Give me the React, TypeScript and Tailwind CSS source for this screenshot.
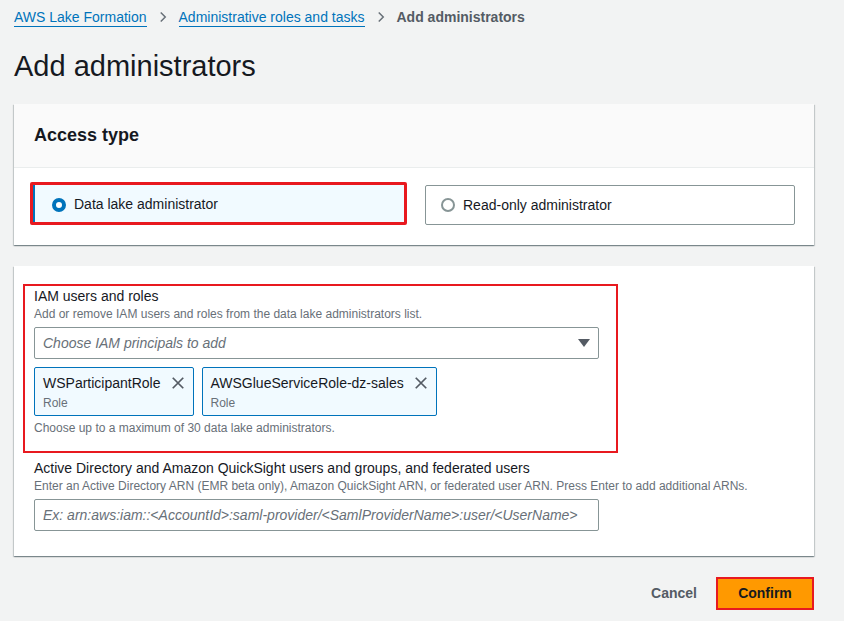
import React from 'react';

const ChevronRight = () => (
  <svg width="12" height="12" viewBox="0 0 16 16" className="mx-[10px]">
    <path d="M5 2l6 6-6 6" fill="none" stroke="#687078" strokeWidth="2" />
  </svg>
);

const XIcon = () => (
  <svg width="14" height="14" viewBox="0 0 16 16">
    <path d="M2 2l12 12M14 2L2 14" fill="none" stroke="#545b64" strokeWidth="2" />
  </svg>
);

const Token = ({ name }: { name: string }) => (
  <div className="flex items-start gap-[10px] border border-[#0073bb] bg-[#f1faff] rounded-[2px] pl-[8px] pr-[8px] pt-[5px] pb-[4px]">
    <div className="flex flex-col">
      <span className="text-[14px] leading-[20px] text-[#16191f]">{name}</span>
      <span className="text-[12px] leading-[16px] text-[#687078] mt-[2px]">Role</span>
    </div>
    <div className="mt-[3px]">
      <XIcon />
    </div>
  </div>
);

const App = () => {
  return (
    <div
      className="w-[844px] h-[621px] bg-[#f2f3f3] overflow-hidden px-[14px]"
      style={{ fontFamily: '"Liberation Sans", Arial, sans-serif' }}
    >
      {/* Breadcrumbs */}
      <nav className="flex items-center pt-[6px] h-[28px] text-[14px]">
        <a className="text-[#0073bb] border-b border-[#0073bb] leading-[18px]">AWS Lake Formation</a>
        <ChevronRight />
        <a className="text-[#0073bb] border-b border-[#0073bb] leading-[18px]">Administrative roles and tasks</a>
        <ChevronRight />
        <span className="text-[#545b64] font-bold">Add administrators</span>
      </nav>

      <h1 className="text-[29px] leading-[36px] text-[#16191f] mt-[20px]">Add administrators</h1>

      {/* Access type card */}
      <section className="w-[800px] mt-[20px] bg-white shadow-[0_1px_1px_0_rgba(0,28,36,0.3),1px_1px_1px_0_rgba(0,28,36,0.15),-1px_1px_1px_0_rgba(0,28,36,0.15)]">
        <div className="h-[64px] bg-[#fafafa] border-b border-[#eaeded] flex items-center px-[20px]">
          <h2 className="text-[18px] font-bold text-[#16191f]">Access type</h2>
        </div>
        <div className="flex gap-[18px] px-[16px] pt-[14px] pb-[20px]">
          <div className="w-[377px] border-[3px] border-[#e8191f] rounded-[2px]">
            <div className="h-[37px] bg-[#f1faff] border-l-2 border-[#0073bb] flex items-center px-[17px] gap-[8px] pt-[2px]">
              <span className="w-[14px] h-[14px] rounded-full border-[4px] border-[#0073bb] bg-white" />
              <span className="text-[14px] text-[#16191f]">Data lake administrator</span>
            </div>
          </div>
          <div className="w-[370px] h-[40px] mt-[3px] border border-[#879596] rounded-[2px] flex items-center px-[15px] gap-[8px]">
            <span className="w-[14px] h-[14px] rounded-full border-2 border-[#879596] bg-white" />
            <span className="text-[14px] text-[#16191f]">Read-only administrator</span>
          </div>
        </div>
      </section>

      {/* Principals card */}
      <section className="w-[800px] mt-[21px] bg-white px-[9px] pt-[18px] pb-[25px] shadow-[0_1px_1px_0_rgba(0,28,36,0.3),1px_1px_1px_0_rgba(0,28,36,0.15),-1px_1px_1px_0_rgba(0,28,36,0.15)]">
        <div className="w-[595px] border-[2px] border-[#e8191f] px-[9px] pb-[15px]">
          <div className="text-[14px] leading-[20px] text-[#16191f]">IAM users and roles</div>
          <div className="text-[12px] leading-[16px] text-[#687078]">Add or remove IAM users and roles from the data lake administrators list.</div>
          <div className="w-[565px] h-[32px] mt-[5px] border border-[#879596] rounded-[2px] flex items-center justify-between px-[8px]">
            <span className="text-[14px] italic text-[#687078]">Choose IAM principals to add</span>
            <svg width="12" height="10" viewBox="0 0 12 10">
              <path d="M0 1h12L6 9z" fill="#545b64" />
            </svg>
          </div>
          <div className="flex gap-[8px] mt-[8px]">
            <Token name="WSParticipantRole" />
            <Token name="AWSGlueServiceRole-dz-sales" />
          </div>
          <div className="text-[12px] leading-[16px] text-[#687078] mt-[4px]">Choose up to a maximum of 30 data lake administrators.</div>
        </div>

        <div className="px-[11px] mt-[5px]">
          <div className="text-[14px] leading-[20px] text-[#16191f]">Active Directory and Amazon QuickSight users and groups, and federated users</div>
          <div className="text-[12px] leading-[16px] text-[#687078]">Enter an Active Directory ARN (EMR beta only), Amazon QuickSight ARN, or federated user ARN. Press Enter to add additional ARNs.</div>
          <div className="w-[565px] h-[32px] mt-[5px] border border-[#879596] rounded-[2px] flex items-center px-[8px]">
            <span className="text-[14px] italic text-[#687078]">Ex: arn:aws:iam::&lt;AccountId&gt;:saml-provider/&lt;SamlProviderName&gt;:user/&lt;UserName&gt;</span>
          </div>
        </div>
      </section>

      {/* Actions */}
      <div className="w-[800px] flex justify-end items-center gap-[19px] mt-[21px]">
        <span className="text-[14px] font-bold text-[#545b64]">Cancel</span>
        <div className="border-[2px] border-[#e8191f]">
          <button className="w-[94px] h-[29px] bg-[#ff9900] text-[14px] font-bold text-[#16191f]">Confirm</button>
        </div>
      </div>
    </div>
  );
};

export default App;
